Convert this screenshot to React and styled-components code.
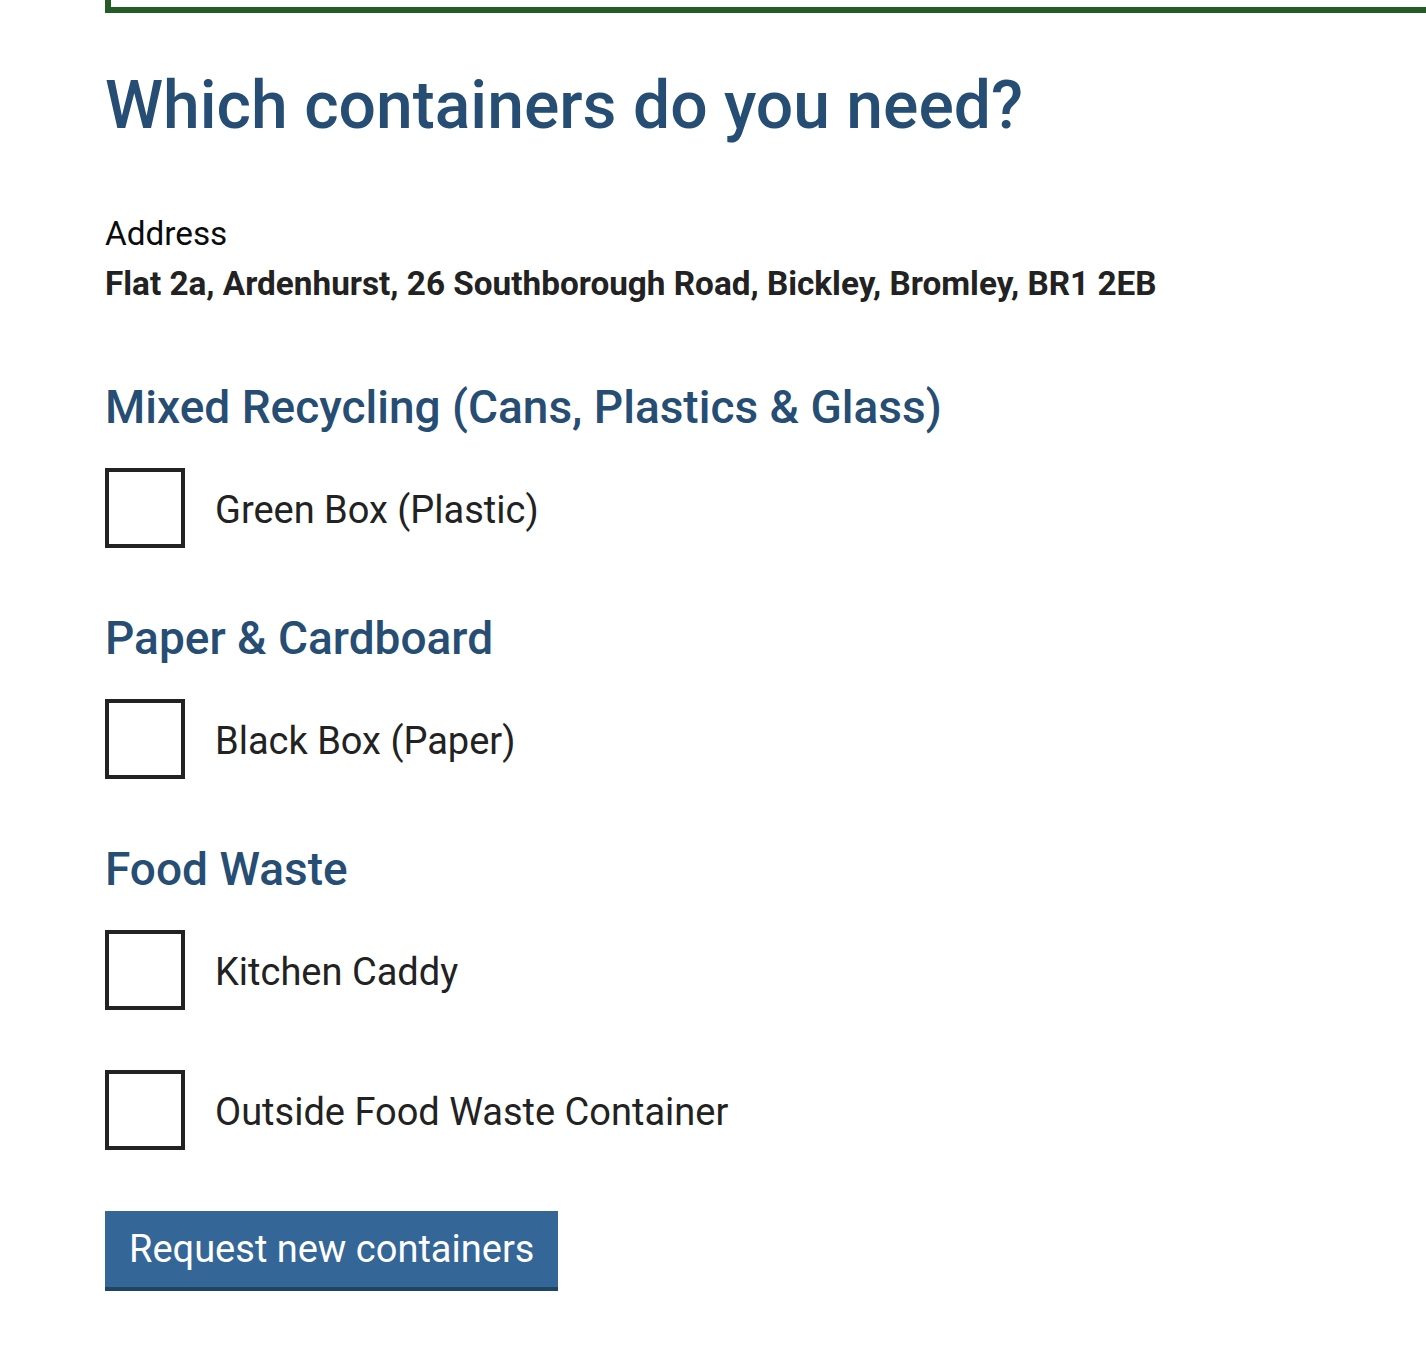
import styled, { createGlobalStyle } from "styled-components";

const GlobalStyle = createGlobalStyle`
  body {
    margin: 0;
    background: #ffffff;
    font-family: Roboto, "Liberation Sans", Arial, sans-serif;
    overflow-x: hidden;
  }
`;

const Page = styled.div`
  padding: 0 0 60px 105px;
  overflow: hidden;
`;

const Notice = styled.div`
  height: 7px;
  margin-right: -40px;
  border: 6px solid #245c26;
  border-top: none;
`;

const Title = styled.h1`
  margin: 51px 0 0;
  font-size: 66px;
  line-height: 84px;
  font-weight: 500;
  color: #264d73;
`;

const AddressBlock = styled.div`
  margin-top: 61px;
  font-size: 33.3px;
  line-height: 50px;
  color: #0b0c0c;
`;

const AddressValue = styled.div`
  font-weight: 700;
  color: #222222;
`;

const Section = styled.section`
  margin-top: ${(p) => (p.first ? "69px" : "61px")};
`;

const SectionTitle = styled.h2`
  margin: 0 0 32px;
  font-size: 46px;
  line-height: 58px;
  font-weight: 500;
  color: #264d73;
`;

const Option = styled.label`
  display: flex;
  align-items: center;
  gap: 30px;
  margin-top: ${(p) => (p.spaced ? "60px" : "0")};
  cursor: pointer;
`;

const Box = styled.input`
  appearance: none;
  margin: 0;
  width: 80px;
  height: 80px;
  box-sizing: border-box;
  border: 4px solid #222222;
  background: #ffffff;
  flex: none;
`;

const OptionText = styled.span`
  font-size: 38px;
  line-height: 44px;
  padding-top: 3px;
  color: #222222;
`;

const Button = styled.button`
  margin-top: 61px;
  display: inline-block;
  height: 80px;
  box-sizing: border-box;
  padding: 0 24px;
  border: none;
  border-bottom: 4px solid #1e4466;
  border-radius: 0;
  background: #346697;
  color: #ffffff;
  font-family: Roboto, "Liberation Sans", Arial, sans-serif;
  font-size: 38px;
  line-height: 76px;
`;

const sections = [
  { title: "Mixed Recycling (Cans, Plastics & Glass)", items: ["Green Box (Plastic)"] },
  { title: "Paper & Cardboard", items: ["Black Box (Paper)"] },
  { title: "Food Waste", items: ["Kitchen Caddy", "Outside Food Waste Container"] },
];

const App = () => {
  return (
    <Page>
      <GlobalStyle />
      <Notice />
      <Title>Which containers do you need?</Title>
      <AddressBlock>
        <div>Address</div>
        <AddressValue>Flat 2a, Ardenhurst, 26 Southborough Road, Bickley, Bromley, BR1 2EB</AddressValue>
      </AddressBlock>
      {sections.map((s, i) => (
        <Section key={s.title} first={i === 0}>
          <SectionTitle>{s.title}</SectionTitle>
          {s.items.map((item, j) => (
            <Option key={item} spaced={j > 0}>
              <Box type="checkbox" />
              <OptionText>{item}</OptionText>
            </Option>
          ))}
        </Section>
      ))}
      <Button>Request new containers</Button>
    </Page>
  );
};

export default App;
